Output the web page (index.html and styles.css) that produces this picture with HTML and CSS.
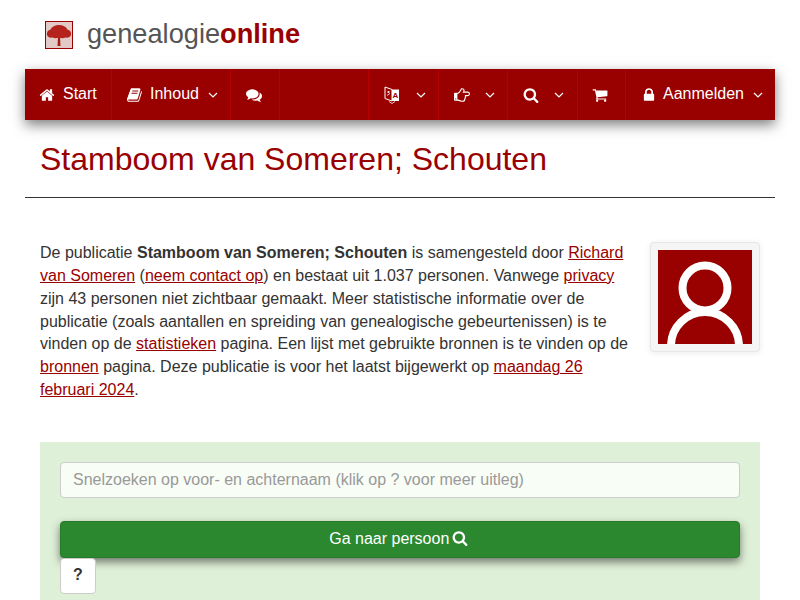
FILE: index.html
```html
<!DOCTYPE html>
<html lang="nl">
<head>
  <meta charset="UTF-8">
  <meta name="viewport" content="width=device-width, initial-scale=1.0">
  <title>Stamboom van Someren; Schouten</title>
  <link rel="stylesheet" href="styles.css">
</head>
<body>
  <div class="page">

    <div class="site-logo">
      <svg class="logo-tree" viewBox="0 0 26 26">
        <rect width="26" height="26" fill="#e2cbc7"/>
        <path d="M12 15h2l.5 9h-3z" fill="#a81c14"/>
        <path d="M1 13c-.500-3 1-5 3.500-5.500C6 4.500 9 3 13 3s7 1.500 8.500 4.500C24 8 25.500 10 25 13c-.500 2-3 3-5.500 2.500-2 1-4 1-6.500 0-2.500 1-4.500 1-6.500 0C4 16 1.500 15 1 13z" fill="#b5241c"/>
      </svg>
      <span class="logo-name">genealogie<b>online</b></span>
    </div>

    <nav class="main-nav">
      <a class="nav-item nav-start">
        <svg class="icon" viewBox="0 0 1792 1792"><path d="M1472 992v480q0 26-19 45t-45 19h-384v-384h-256v384h-384q-26 0-45-19t-19-45v-480q0-1 .5-3t.5-3l575-474 575 474q1 2 1 6zm223-69l-62 74q-8 9-21 11h-3q-13 0-21-7l-692-577-692 577q-12 8-24 7-13-2-21-11l-62-74q-8-10-7-23.5t11-21.5l719-599q32-26 76-26t76 26l244 204v-195q0-14 9-23t23-9h192q14 0 23 9t9 23v408l219 182q10 8 11 21.5t-7 23.5z"/></svg>
        Start
      </a>
      <a class="nav-item nav-inhoud">
        <svg class="icon" viewBox="0 0 1792 1792"><path d="M1639 478q40 57 18 129l-275 906q-19 64-76.5 107.5t-122.5 43.5h-923q-77 0-148.5-53.5t-99.5-131.5q-24-67-2-127 0-4 3-27t4-37q1-8-3-21.5t-3-19.5q2-11 8-21t16.5-23.5 16.5-23.5q23-38 45-91.5t30-91.5q3-10 .5-30t-.5-28q3-11 17-28t17-23q21-36 42-92t25-90q1-9-2.5-32t.5-28q4-13 22-30.5t22-22.5q19-26 42.5-84.5t27.5-96.5q1-8-3-25.5t-2-26.5q2-8 9-18t18-23 17-21q8-12 16.5-30.5t15-35 16-36 19.5-32 26.5-23.5 36-11.5 47.5 5.5l-1 3q38-9 51-9h761q74 0 114 56t18 130l-274 906q-36 119-71.5 153.5t-128.5 34.5h-869q-27 0-38 15-11 16-1 43 24 70 144 70h923q29 0 56-15.5t35-41.5l300-987q7-22 5-57 38 15 59 43zm-1064 2q-4 13 2 22.5t20 9.5h608q13 0 25.5-9.5t16.5-22.5l21-64q4-13-2-22.5t-20-9.5h-608q-13 0-25.5 9.5t-16.5 22.5zm-83 256q-4 13 2 22.5t20 9.5h608q13 0 25.5-9.5t16.5-22.5l21-64q4-13-2-22.5t-20-9.5h-608q-13 0-25.5 9.5t-16.5 22.5z"/></svg>
        Inhoud
        <svg class="caret" viewBox="0 0 10 6"><path d="M1 1l4 4 4-4"/></svg>
      </a>
      <a class="nav-item nav-chat">
        <svg class="icon" viewBox="0 0 1792 1792"><path d="M1408 768q0 139-94 257t-256.5 186.5-353.5 68.5q-86 0-176-16-124 88-278 128-36 9-86 16h-3q-11 0-20.5-8t-11.5-21q-1-3-1-6.5t.5-6.5 2-6l2.5-5 3.5-5.5 4-5 4.5-5 4-4.5q5-6 23-25t26-29.5 22.5-29 25-38.5 20.5-44q-124-72-195-177t-71-224q0-139 94-257t256.5-186.5 353.5-68.5 353.5 68.5 256.5 186.5 94 257zm384 256q0 120-71 224.5t-195 176.5q10 24 20.5 44t25 38.5 22.5 29 26 29.5 23 25q1 1 4 4.5t4.5 5 4 5 3.5 5.5l2.5 5 2 6 .5 6.5-1 6.5q-3 14-13 22t-22 7q-50-7-86-16-154-40-278-128-90 16-176 16-271 0-472-132 58 4 88 4 161 0 309-45t264-129q125-92 192-212t67-254q0-77-23-152 129 71 204 178t75 230z"/></svg>
      </a>
      <div class="nav-gap"></div>
      <a class="nav-item nav-lang">
        <svg class="icon-lang" viewBox="0 0 16 18">
          <path d="M1 1l7 2.500v11.500l-7-2.500z" fill="none" stroke="#fff" stroke-width="1"/>
          <path d="M8 3.500h7v11.500H8z" fill="#fff"/>
          <text class="lang-letter" x="11.500" y="12">A</text>
          <path d="M3 6h3M4.500 5v2M3 9.500l3-2" stroke="#fff" stroke-width=".8" fill="none"/>
          <path d="M5 15.500l3 2 3-2" stroke="#fff" stroke-width=".8" fill="none"/>
        </svg>
        <svg class="caret" viewBox="0 0 10 6"><path d="M1 1l4 4 4-4"/></svg>
      </a>
      <a class="nav-item nav-hand">
        <svg class="icon" viewBox="0 0 1792 1792"><path d="M256 1344q0-26-19-45t-45-19-45 19-19 45 19 45 45 19 45-19 19-45zm1408-576q0-51-39-89.500t-89-38.500h-576q0-20 15-48.500t33-55 33-68 15-84.500q0-67-44.500-97.500t-115.500-30.500q-24 0-90 139-24 44-37 65-40 64-112 145-71 81-101 106-69 57-140 57h-32v640h32q72 0 167 32t193.500 64 179.500 32q189 0 189-167 0-26-5-56 30-16 47.500-52.500t17.500-73.500-18-69q53-50 53-119 0-25-10-55.500t-25-47.500h331q52 0 90-38t38-90zm128-1q0 105-75.500 181t-180.500 76h-169q-4 62-37 119 3 21 3 43 0 101-60 178 1 139-85 219.500t-227 80.500q-133 0-322-69-164-59-223-59h-288q-53 0-90.500-37.500t-37.500-90.500v-640q0-53 37.500-90.500t90.500-37.500h288q10 0 21.500-4.500t23.500-14 22.500-18 24-22.500 20.500-21.500 19-21.500 14-17q65-74 100-129 13-21 33-62t37-72 40.500-63 55-49.500 69.500-17.500q125 0 206.500 67t81.500 189q0 68-22 128h374q104 0 180 76t76 179z"/></svg>
        <svg class="caret" viewBox="0 0 10 6"><path d="M1 1l4 4 4-4"/></svg>
      </a>
      <a class="nav-item nav-search">
        <svg class="icon" viewBox="0 0 1792 1792"><path d="M1216 832q0-185-131.500-316.500t-316.500-131.500-316.500 131.500-131.500 316.500 131.500 316.500 316.500 131.500 316.500-131.500 131.500-316.500zm512 832q0 52-38 90t-90 38q-54 0-90-38l-343-342q-179 124-399 124-143 0-273.500-55.500t-225-150-150-225-55.500-273.500 55.500-273.500 150-225 225-150 273.500-55.500 273.500 55.500 225 150 150 225 55.500 273.500q0 220-124 399l343 343q37 37 37 90z"/></svg>
        <svg class="caret" viewBox="0 0 10 6"><path d="M1 1l4 4 4-4"/></svg>
      </a>
      <a class="nav-item nav-cart">
        <svg class="icon" viewBox="0 0 1792 1792"><path d="M704 1536q0 52-38 90t-90 38-90-38-38-90 38-90 90-38 90 38 38 90zm896 0q0 52-38 90t-90 38-90-38-38-90 38-90 90-38 90 38 38 90zm128-1088v512q0 24-16.500 42.500t-40.500 21.500l-1044 122q13 60 13 70 0 16-24 64h920q26 0 45 19t19 45-19 45-45 19h-1024q-26 0-45-19t-19-45q0-11 8-31.500t16-36 21.500-40 15.500-29.500l-177-823h-204q-26 0-45-19t-19-45 19-45 45-19h256q16 0 28.500 6.500t19.500 15.500 13 24.500 8 26 5.500 29.500 4.500 26h1201q26 0 45 19t19 45z"/></svg>
      </a>
      <a class="nav-item nav-login">
        <svg class="icon" viewBox="0 0 1792 1792"><path d="M640 768h512v-192q0-106-75-181t-181-75-181 75-75 181v192zm832 96v576q0 40-28 68t-68 28h-960q-40 0-68-28t-28-68v-576q0-40 28-68t68-28h32v-192q0-184 132-316t316-132 316 132 132 316v192h32q40 0 68 28t28 68z"/></svg>
        Aanmelden
        <svg class="caret" viewBox="0 0 10 6"><path d="M1 1l4 4 4-4"/></svg>
      </a>
    </nav>

    <h1 class="page-title">Stamboom van Someren; Schouten</h1>

    <section class="intro">
      <p class="intro-text">De publicatie <b>Stamboom van Someren; Schouten</b> is samengesteld door <a href="#">Richard van Someren</a> (<a href="#">neem contact op</a>) en bestaat uit 1.037 personen. Vanwege <a href="#">privacy</a> zijn 43 personen niet zichtbaar gemaakt. Meer statistische informatie over de publicatie (zoals aantallen en spreiding van genealogische gebeurtenissen) is te vinden op de <a href="#">statistieken</a> pagina. Een lijst met gebruikte bronnen is te vinden op de <a href="#">bronnen</a> pagina. Deze publicatie is voor het laatst bijgewerkt op <a href="#">maandag 26 februari 2024</a>.</p>
      <div class="thumbnail">
        <svg viewBox="0 0 94 94">
          <rect width="94" height="94" fill="#990000"/>
          <circle cx="47" cy="38" r="22.500" fill="none" stroke="#fff" stroke-width="8"/>
          <circle cx="47" cy="96" r="34" fill="none" stroke="#fff" stroke-width="8"/>
        </svg>
      </div>
    </section>

    <section class="quick-search">
      <input class="search-input" type="text" placeholder="Snelzoeken op voor- en achternaam (klik op ? voor meer uitleg)">
      <button class="search-btn">Ga naar persoon
        <svg class="icon" viewBox="0 0 1792 1792"><path d="M1216 832q0-185-131.500-316.500t-316.500-131.500-316.500 131.500-131.500 316.500 131.500 316.500 316.500 131.500 316.500-131.500 131.500-316.500zm512 832q0 52-38 90t-90 38q-54 0-90-38l-343-342q-179 124-399 124-143 0-273.500-55.500t-225-150-150-225-55.500-273.500 55.500-273.500 150-225 225-150 273.500-55.500 273.500 55.500 225 150 150 225 55.500 273.500q0 220-124 399l343 343q37 37 37 90z"/></svg>
      </button>
      <button class="help-btn">?</button>
    </section>

  </div>
</body>
</html>
```

FILE: styles.css
```css
* { box-sizing: border-box; }
html, body { margin: 0; padding: 0; height: 100%; overflow: hidden; }
body { font-family: "Liberation Sans", Arial, sans-serif; font-size: 16px; line-height: 1.42857; color: #333; background: #fff; }
a { color: #990000; }
.page { width: 750px; margin: 0 auto; }

/* logo */
.site-logo { display: flex; align-items: center; height: 69px; padding-left: 20px; }
.logo-tree { width: 28px; height: 28px; border: 1px solid #990000; margin-top: 1px; }
.logo-name { margin-left: 14px; font-size: 27.2px; color: #555; }
.logo-name b { color: #990000; }

/* menu */
.main-nav { display: flex; height: 51px; background: #990000; box-shadow: 0 5px 12px rgba(0, 0, 0, 0.5); color: #fff; }
.nav-item { display: flex; align-items: center; padding-left: 15px; color: #fff; border-right: 1px solid #b30000; flex: none; }
.nav-gap { flex: 1; border-right: 1px solid #b30000; }
.nav-start { width: 87px; padding-left: 14px; }
.nav-inhoud { width: 119px; }
.nav-chat { width: 49px; }
.nav-lang { width: 70px; }
.nav-hand { width: 69px; }
.nav-search { width: 70px; }
.nav-cart { width: 48px; padding-left: 14px; }
.nav-login { width: 149px; border-right: 0; }
.icon { width: 16px; height: 16px; fill: currentColor; flex: none; }
.nav-item .icon { margin-right: 8px; }
.nav-inhoud .icon { margin-right: 7px; }
.nav-login .icon { margin-right: 6px; }
.icon-lang { width: 16px; height: 18px; flex: none; }
.lang-letter { font-size: 8px; font-weight: bold; fill: #990000; text-anchor: middle; }
.caret { width: 10px; height: 6px; margin-left: 9px; fill: none; stroke: #fff; stroke-width: 1.2; flex: none; }
.nav-lang .caret { margin-left: 16px; }
.nav-hand .caret { margin-left: 7px; }
.nav-search .caret { margin-left: 7px; }

.page-title { margin: 0; padding: 21px 15px 19px; font-size: 32px; line-height: 37px; font-weight: 400; color: #990000; border-bottom: 1px solid #333; }

/* intro */
.intro { display: flex; justify-content: space-between; padding: 44px 15px 0; }
.intro-text { margin: 0; width: 596px; }
.thumbnail { width: 110px; height: 110px; padding: 7px; background: #f5f5f5; border: 1px solid #e6e6e6; border-radius: 4px; box-shadow: 0 1px 6px rgba(0, 0, 0, 0.08); }
.thumbnail svg { display: block; width: 94px; height: 94px; }

/* snelzoeken */
.quick-search { display: flex; flex-direction: column; margin: 40px 15px 0; padding: 20px 20px 40px; background: #dff0d8; }
.search-input { height: 36px; padding: 6px 12px; font: inherit; color: #333; background: #f8fdf6; border: 1px solid #ccc; border-radius: 4px; }
.search-input::placeholder { color: #999; }
.search-btn { height: 37px; margin-top: 23px; padding: 0; font: inherit; color: #fff; background: #2b882f; border: 1px solid #267a2a; border-radius: 4px; box-shadow: 0 4px 8px rgba(0, 0, 0, 0.5); }
.search-btn .icon { vertical-align: -2px; margin-left: -2px; margin-right: 3px; }
.help-btn { width: 36px; height: 36px; padding: 0; font: inherit; font-weight: bold; color: #333; background: #fff; border: 1px solid #ccc; border-radius: 4px; }
```
